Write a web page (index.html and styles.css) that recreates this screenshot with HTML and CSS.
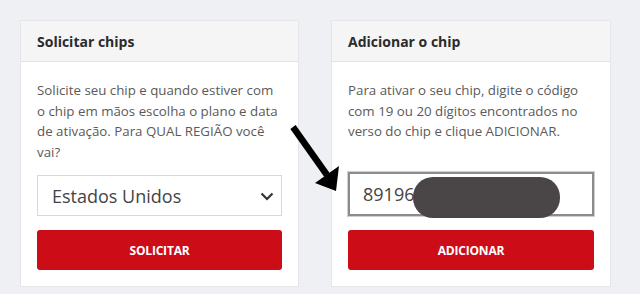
FILE: index.html
```html
<!DOCTYPE html>
<html lang="pt-BR">
<head>
<meta charset="utf-8">
<link rel="stylesheet" href="styles.css">
</head>
<body>
<div class="page">
  <div class="card">
    <div class="card-header">Solicitar chips</div>
    <div class="card-body">
      <p class="desc">Solicite seu chip e quando estiver com o chip em mãos escolha o plano e data de ativação. Para QUAL REGIÃO você vai?</p>
      <div class="form">
        <div class="select">
          <span>Estados Unidos</span>
          <svg class="chev" width="14" height="9" viewBox="0 0 14 9"><path d="M1.5 1.5 L7 7 L12.5 1.5" fill="none" stroke="#333" stroke-width="2.2"/></svg>
        </div>
        <button class="btn">SOLICITAR</button>
      </div>
    </div>
  </div>
  <div class="card">
    <div class="card-header">Adicionar o chip</div>
    <div class="card-body">
      <p class="desc">Para ativar o seu chip, digite o código com 19 ou 20 dígitos encontrados no verso do chip e clique ADICIONAR.</p>
      <div class="form">
        <div class="input"><span>89196</span><span class="blob"></span></div>
        <button class="btn">ADICIONAR</button>
      </div>
    </div>
  </div>
  <svg class="arrow" width="60" height="70" viewBox="0 0 60 70">
    <line x1="4" y1="4" x2="38" y2="52" stroke="#000" stroke-width="6.5"/>
    <polygon points="26,60 50,43 47,68" fill="#000"/>
  </svg>
</div>
</body>
</html>
```

FILE: styles.css
```css
* { box-sizing: border-box; }
html, body { margin: 0; padding: 0; }
body {
  background: #eef0f4;
  font-family: "Open Sans", "Liberation Sans", sans-serif;
  width: 640px;
  height: 294px;
  overflow: hidden;
}
.page {
  position: relative;
  display: flex;
  gap: 32px;
  padding: 20px 0 0 20px;
}
.card {
  width: 279px;
  height: 267px;
  background: #fff;
  border: 1px solid #e4e6ea;
  display: flex;
  flex-direction: column;
}
.card + .card { width: 280px; }
.card-header {
  height: 41px;
  background: #f5f5f6;
  border-bottom: 1px solid #e2e2e4;
  padding-left: 16px;
  display: flex;
  align-items: center;
  font-weight: 700;
  font-size: 14px;
  color: #2b2b2b;
}
.card-body {
  flex: 1;
  display: flex;
  flex-direction: column;
  padding: 18px 16px 16px 16px;
}
.desc {
  margin: 0;
  font-size: 13.3px;
  line-height: 20.5px;
  color: #5a5a5a;
}
.form {
  margin-top: auto;
  display: flex;
  flex-direction: column;
  gap: 14px;
}
.select {
  height: 41px;
  border: 1px solid #d8d8d8;
  display: flex;
  align-items: center;
  justify-content: space-between;
  padding: 0 7px 0 14px;
  font-size: 18px;
  color: #444;
}
.chev { margin-top: 1px; }
.input {
  position: relative;
  height: 44px;
  margin-top: -2px;
  border: 2px solid #8c8c8c;
  outline: 1px solid #cfcfcf;
  display: flex;
  align-items: center;
  padding-left: 13px;
  font-size: 18px;
  color: #444;
}
.blob {
  position: absolute;
  left: 63px;
  top: 3px;
  width: 147px;
  height: 41px;
  background: #4a4546;
  border-radius: 20px;
}
.btn {
  height: 40px;
  border: none;
  border-radius: 3px;
  background: #cc0d17;
  color: #fff;
  font-family: "Open Sans", "Liberation Sans", sans-serif;
  font-weight: 700;
  font-size: 12px;
  letter-spacing: -0.2px;
}
.arrow {
  position: absolute;
  left: 289px;
  top: 123px;
}
```
